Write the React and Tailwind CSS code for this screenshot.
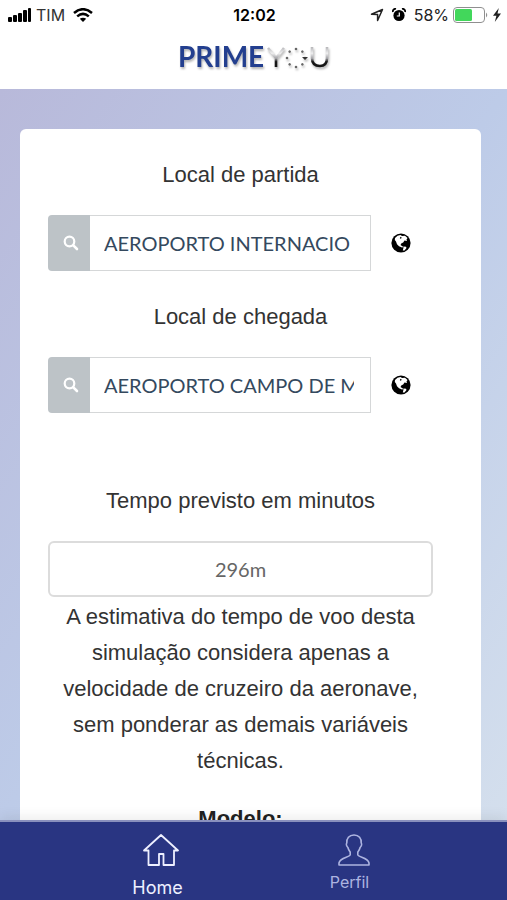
import { useState } from 'react';

function SignalIcon() {
  return (
    <svg className="h-3.5 w-6" viewBox="0 0 24 14" fill="currentColor" aria-hidden="true">
      <rect x="0" y="9" width="4" height="5" rx="1" />
      <rect x="5" y="7" width="4" height="7" rx="1" />
      <rect x="10" y="5" width="4" height="9" rx="1" />
      <rect x="15" y="2" width="4" height="12" rx="1" />
      <rect x="20" y="0" width="3" height="14" rx="1" />
    </svg>
  );
}

function WifiIcon() {
  return (
    <svg className="h-3.5 w-5" viewBox="0 0 20 14" fill="none" stroke="currentColor" strokeWidth="2.5" aria-hidden="true">
      <path d="M1 5 Q10 -2.6 19 5" />
      <path d="M4.200 8.400 Q10 3.400 15.800 8.400" />
      <path d="M10 14 L6.800 10.800 Q10 8.600 13.200 10.800 Z" fill="currentColor" stroke="none" />
    </svg>
  );
}

function LocationIcon() {
  return (
    <svg className="size-3.5" viewBox="0 0 14 14" fill="none" stroke="currentColor" strokeWidth="1.500" strokeLinejoin="round" aria-hidden="true">
      <path d="M12.500 1.500 L7.600 12.500 V6.600 L1.500 6.300 Z" />
    </svg>
  );
}

function AlarmIcon() {
  return (
    <svg className="size-3.5" viewBox="0 0 14 14" aria-hidden="true">
      <path d="M1 4 A2.400 2.400 0 0 1 4 1 M10 1 A2.400 2.400 0 0 1 13 4" fill="none" stroke="currentColor" strokeWidth="1.800" />
      <circle cx="7" cy="7.500" r="5.600" fill="currentColor" />
      <path d="M7.300 4.500 V8 H4.800" fill="none" stroke="#fff" strokeWidth="1.200" />
    </svg>
  );
}

function BatteryIcon() {
  return (
    <svg className="h-4 w-9" viewBox="0 0 36 16" aria-hidden="true">
      <rect x="0.500" y="0.500" width="31" height="15" rx="3.500" fill="#fff" stroke="#8f8f8f" />
      <rect x="2" y="2" width="17" height="12" rx="1.500" fill="#42d75b" />
      <path d="M33 5.500 Q35.500 8 33 10.500 Z" fill="#8f8f8f" />
    </svg>
  );
}

function BoltIcon() {
  return (
    <svg className="h-3.5 w-2" viewBox="0 0 8 14" fill="currentColor" aria-hidden="true">
      <path d="M5.800 0 L0 7.800 H3.400 L1.800 14 L8 5.600 H4.500 Z" />
    </svg>
  );
}

function SearchIcon() {
  return (
    <svg className="size-4" viewBox="0 0 16 16" fill="none" stroke="currentColor" aria-hidden="true">
      <circle cx="6.500" cy="6.500" r="4.800" strokeWidth="2.200" />
      <path d="M10.300 10.300 L14 14" strokeWidth="2.600" strokeLinecap="round" />
    </svg>
  );
}

function GlobeIcon() {
  return (
    <svg className="size-5" viewBox="0 0 20 20" aria-hidden="true">
      <circle cx="10" cy="10" r="9.600" fill="#000" />
      <path d="M4 5 L6.500 2.700 L9.500 2 L11 3 L14 2.800 L16.500 5 L15.500 6.500 L16 8 L13.500 7.500 L12.200 9.500 L10.500 10.200 L9.500 12 L11 13 L12.500 14 L11 14.500 L8 13.200 L6 11.200 L5 8.500 L3.800 7 Z" fill="#fff" />
      <path d="M12.500 13.500 L15 13.800 L15.500 15 L13.500 17.500 L11.800 17.600 L12.300 15.500 Z" fill="#fff" />
      <path d="M9.500 3.800 L10.800 4.800 L9.800 5.800 L8.800 5.200 Z" fill="#000" />
    </svg>
  );
}

function HomeIcon() {
  return (
    <svg className="ml-1.5 h-8 w-9" viewBox="0 0 36 32" fill="none" stroke="currentColor" strokeWidth="1.800" strokeLinejoin="round" aria-hidden="true">
      <path d="M18 1 L35 16.500 H31 V31 H20.500 V20 H16 V31 H5.500 V16.500 H1 Z" />
    </svg>
  );
}

function ProfileIcon() {
  return (
    <svg className="ml-2 size-8" viewBox="0 0 32 32" fill="none" stroke="currentColor" strokeWidth="1.600" strokeLinejoin="round" aria-hidden="true">
      <path d="M16 1 C11 1 8.500 4.500 8.800 9 C7.800 9.800 8.600 12.500 9.800 13.300 C10.300 15.500 11.500 17 12.200 18 V21 C11 23.500 2 23.500 1 29 V31 H31 V29 C30 23.500 21 23.500 19.800 21 V18 C20.500 17 21.700 15.500 22.200 13.300 C23.400 12.500 24.200 9.800 23.200 9 C23.500 4.500 21 1 16 1 Z" />
    </svg>
  );
}

// blue word mark, the "O" is a ring of dots
function Logo() {
  const dots = [0, 45, 90, 135, 180, 225, 270, 315];
  return (
    <svg className="h-9 w-40 drop-shadow-[1px_2px_1px_rgba(0,0,0,0.3)]" viewBox="0 0 160 36" role="img" aria-label="PRIMEYOU">
      <defs>
        <linearGradient id="chrome" gradientUnits="userSpaceOnUse" x1="0" y1="10" x2="0" y2="31">
          <stop offset="0" stopColor="#b5b5b8" />
          <stop offset="0.300" stopColor="#eeeeef" />
          <stop offset="0.550" stopColor="#a0a0a4" />
          <stop offset="0.700" stopColor="#151515" />
        </linearGradient>
      </defs>
      <text x="4" y="30" fontFamily="Lato, sans-serif" fontWeight="700" fontSize="28" fill="#233f8f">PRIME</text>
      <path d="M94 11 L102 21 L110 11 M102 20 V30" fill="none" stroke="url(#chrome)" strokeWidth="2.600" />
      {dots.map((deg) => (
        <circle key={deg} cx="122" cy="12" r="1.300" fill="#666" transform={`rotate(${deg} 122 21)`} />
      ))}
      <path d="M128 20 L134 20 L131 23 Z" fill="#333" />
      <path d="M138 10 V21 Q138 29 146 29 Q153 29 153 21 V10" fill="none" stroke="url(#chrome)" strokeWidth="2.600" />
    </svg>
  );
}

function StatusBar() {
  return (
    <div className="grid h-[30px] grid-cols-[1fr_auto_1fr] items-center pr-1.5 pl-2 text-base text-[#222]">
      <div className="flex items-center gap-1 text-black">
        <SignalIcon />
        <span className="mr-1 text-[#333]">TIM</span>
        <WifiIcon />
      </div>
      <span className="font-semibold text-black">12:02</span>
      <div className="flex items-center justify-end gap-1">
        <LocationIcon />
        <span className="mx-1 flex text-black"><AlarmIcon /></span>
        <span>58%</span>
        <BatteryIcon />
        <BoltIcon />
      </div>
    </div>
  );
}

function AirportField({ id, label, value, onChange }) {
  return (
    <div>
      <label htmlFor={id} className="block text-center text-[22px] leading-9">{label}</label>
      <div className="mt-[22px] flex items-center">
        <div className="flex h-14 min-w-0 flex-1">
          <button type="button" aria-label="Buscar" className="flex w-[42px] shrink-0 items-center justify-center rounded-l bg-[#bdc3c7] pl-1 text-white">
            <SearchIcon />
          </button>
          <div className="min-w-0 flex-1 border border-l-0 border-[#d5d7d8] px-3.5 pr-4">
            <input
              id={id}
              value={value}
              onChange={(e) => onChange(e.target.value)}
              className="h-full w-full font-['Lato',sans-serif] text-xl text-[#34495e] outline-none"
            />
          </div>
        </div>
        <button type="button" aria-label="Ver no mapa" className="mr-[22px] ml-5 flex shrink-0">
          <GlobeIcon />
        </button>
      </div>
    </div>
  );
}

export default function App() {
  const [departure, setDeparture] = useState('AEROPORTO INTERNACIO');
  const [arrival, setArrival] = useState('AEROPORTO CAMPO DE MARTE');
  const [minutes, setMinutes] = useState('296m');

  return (
    <div className="flex h-screen flex-col bg-white font-['Inter','Liberation_Sans',sans-serif]">
      <header className="shrink-0">
        <StatusBar />
        <div className="flex h-[59px] justify-center pt-[7px]">
          <Logo />
        </div>
      </header>

      <main className="min-h-0 flex-1 overflow-y-auto bg-linear-to-br from-[#b8b9da] via-[#bdcbe8] to-[#d4dfed] pt-10 pr-[26px] pl-5 font-['Liberation_Sans',sans-serif] text-[#333] [scrollbar-width:none]">
        <form className="rounded-md bg-white pt-7 pr-12 pb-10 pl-7">
          <AirportField id="departure" label="Local de partida" value={departure} onChange={setDeparture} />
          <div className="mt-7">
            <AirportField id="arrival" label="Local de chegada" value={arrival} onChange={setArrival} />
          </div>

          <label htmlFor="minutes" className="mt-[70px] block text-center text-[22px] leading-9">
            Tempo previsto em minutos
          </label>
          <input
            id="minutes"
            value={minutes}
            onChange={(e) => setMinutes(e.target.value)}
            className="mt-[22px] block h-14 w-full rounded-md border-2 border-[#dcdcdc] text-center font-['Lato',sans-serif] text-xl text-[#666] outline-none"
          />
          <p className="mt-0.5 text-center text-[22px] leading-9">
            A estimativa do tempo de voo desta simulação considera apenas a velocidade de cruzeiro da aeronave, sem ponderar as demais variáveis técnicas.
          </p>
          <p className="mt-[22px] text-center text-[22px] leading-9 font-bold text-[#222]">Modelo:</p>
        </form>
      </main>

      <nav className="z-10 flex h-20 shrink-0 justify-center border-t-2 border-[#8990bd] bg-[#293582] shadow-[0_-3px_12px_rgba(0,0,0,0.08)]">
        <a href="#home" className="flex w-48 flex-col items-center pt-3 text-lg leading-6 text-[#eef0ff]">
          <HomeIcon />
          <span className="mt-2.5">Home</span>
        </a>
        <a href="#perfil" className="flex w-48 flex-col items-center pt-3 text-base leading-6 text-[#adb4e0]">
          <ProfileIcon />
          <span className="mt-1">Perfil</span>
        </a>
      </nav>
    </div>
  );
}
